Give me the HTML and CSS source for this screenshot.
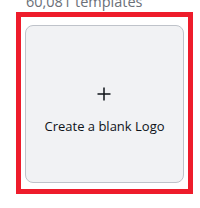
FILE: index.html
```html
<!DOCTYPE html>
<html>
<head>
<meta charset="utf-8">
<link rel="stylesheet" href="styles.css">
</head>
<body>
<div class="page">
  <div class="count">60,081 templates</div>
  <div class="highlight">
    <div class="card">
      <svg class="plus" width="14" height="14" viewBox="0 0 14 14"><path d="M7 0.5V13.5M0.5 7H13.5" stroke="#0e1318" stroke-width="1.5" fill="none"/></svg>
      <div class="label">Create a blank Logo</div>
    </div>
  </div>
</div>
</body>
</html>
```
FILE: styles.css
```css
html, body { margin: 0; padding: 0; background: #fff; }
.page { width: 200px; height: 208px; overflow: hidden; padding-left: 16px; box-sizing: border-box; font-family: "Open Sans", "Noto Sans", sans-serif; }
.count { height: 12px; line-height: 14px; font-size: 14.5px; color: #6b7078; position: relative; top: -5px; padding-left: 10px; white-space: nowrap; }
.highlight { width: 177px; height: 182px; box-sizing: border-box; border: 5px solid #ee1c2b; padding: 8px 4px 6px 4px; }
.card { width: 159px; height: 158px; box-sizing: border-box; border: 1px solid #bfc3ca; border-radius: 8px; background: #f1f2f4; display: flex; flex-direction: column; align-items: center; padding-top: 61px; }
.plus { display: block; margin-left: -1px; }
.label { margin-top: 16px; font-size: 13px; color: #0e1318; line-height: 18px; }
```
